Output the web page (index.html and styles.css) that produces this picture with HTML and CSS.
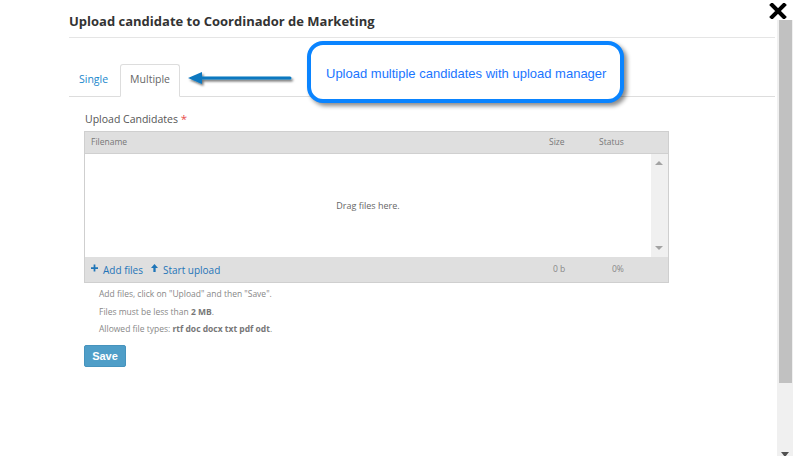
FILE: index.html
```html
<!DOCTYPE html>
<html>
<head>
<meta charset="utf-8">
<link rel="stylesheet" href="styles.css">
</head>
<body>
<div class="page">
  <div class="modal">
    <div class="modal-header">
      <h4 class="title">Upload candidate to Coordinador de Marketing</h4>
    </div>
    <ul class="tabs">
      <li class="tab"><a class="tab-link">Single</a></li>
      <li class="tab active"><a class="tab-link">Multiple</a></li>
    </ul>
    <div class="tab-content">
      <label class="field-label">Upload Candidates <span class="req">*</span></label>
      <div class="uploader">
        <div class="up-head">
          <span class="col-name">Filename</span>
          <span class="col-size">Size</span>
          <span class="col-status">Status</span>
        </div>
        <div class="up-body">
          <div class="drop">Drag files here.</div>
          <div class="up-scroll">
            <span class="tri-up"></span>
            <span class="tri-down"></span>
          </div>
        </div>
        <div class="up-foot">
          <div class="actions">
            <a class="act"><svg class="ico" viewBox="0 0 8 8"><path d="M3 0h2v3h3v2H5v3H3V5H0V3h3z" fill="#1f75b8"/></svg>Add files</a>
            <a class="act"><svg class="ico" viewBox="0 0 8 9"><path d="M4 0L8 4.5H5.3V9H2.7V4.5H0z" fill="#1f75b8"/></svg>Start upload</a>
          </div>
          <span class="foot-size">0 b</span>
          <span class="foot-status">0%</span>
        </div>
      </div>
      <div class="help">
        <p>Add files, click on "Upload" and then "Save".</p>
        <p>Files must be less than <b>2 MB</b>.</p>
        <p>Allowed file types: <b>rtf doc docx txt pdf odt</b>.</p>
      </div>
      <button class="save">Save</button>
    </div>
  </div>
  <div class="scrollbar">
    <div class="thumb"></div>
    <span class="sb-down"></span>
  </div>
</div>

<div class="close">
  <svg viewBox="0 0 18 16" width="18" height="16"><path d="M3 2L15 14M15 2L3 14" stroke="#000" stroke-width="4" stroke-linecap="square"/></svg>
</div>

<svg class="arrow" width="112" height="24" viewBox="0 0 112 24">
  <defs>
    <filter id="sh" x="-20%" y="-50%" width="140%" height="200%">
      <feDropShadow dx="1.5" dy="2" stdDeviation="1.2" flood-color="#000" flood-opacity="0.55"/>
    </filter>
  </defs>
  <g filter="url(#sh)">
    <path d="M2 10L16 4V8.5H104a1.5 1.5 0 0 1 0 3H16V16z" fill="#0b78c0"/>
  </g>
</svg>

<div class="callout">Upload multiple candidates with upload manager</div>
</body>
</html>
```

FILE: styles.css
```css
* { box-sizing: border-box; }
html, body { margin: 0; padding: 0; }
body {
  width: 799px;
  height: 456px;
  overflow: hidden;
  background: #fff;
  font-family: "Open Sans", "Liberation Sans", sans-serif;
  color: #555;
  position: relative;
}
.page {
  display: flex;
  height: 456px;
}
.modal {
  width: 777px;
  padding-left: 69px;
  padding-right: 2px;
}
.modal-header {
  padding-top: 12px;
  height: 38px;
  border-bottom: 1px solid #e5e5e5;
}
.title {
  margin: 0;
  font-size: 13px;
  line-height: 18px;
  font-weight: 700;
  color: #333;
}
.tabs {
  list-style: none;
  margin: 26px 0 0;
  padding: 0;
  display: flex;
  border-bottom: 1px solid #ddd;
  height: 33px;
}
.tab {
  margin-right: 2px;
}
.tab-link {
  display: block;
  padding: 0 9px;
  height: 33px;
  line-height: 29px;
  font-size: 10.5px;
  color: #1a87cc;
  border: 1px solid transparent;
  border-radius: 3px 3px 0 0;
}
.tab.active .tab-link {
  color: #666;
  background: #fff;
  border-color: #ddd #ddd #fff;
}
.tab-content {
  padding: 14px 0 0 15px;
}
.field-label {
  display: block;
  font-size: 10.5px;
  line-height: 16px;
  color: #555;
  padding-left: 1px;
  margin-bottom: 4px;
}
.req { color: #e84c4c; font-size: 11.5px; }
.uploader {
  width: 585px;
  border: 1px solid #cfcfcf;
}
.up-head {
  display: grid;
  grid-template-columns: 1fr 50px 69px;
  height: 22px;
  line-height: 20px;
  background: #dfdfdf;
  border-bottom: 1px solid #d0d0d0;
  font-size: 8.5px;
  color: #777;
}
.col-name { padding-left: 6px; }
.up-body {
  display: flex;
  height: 103px;
  background: #fff;
}
.drop {
  flex: 1;
  text-align: center;
  line-height: 103px;
  font-size: 9px;
  color: #666;
}
.up-scroll {
  width: 17px;
  background: #f0f0f0;
  position: relative;
}
.tri-up, .tri-down {
  position: absolute;
  left: 4px;
  width: 0; height: 0;
  border-left: 4.5px solid transparent;
  border-right: 4.5px solid transparent;
}
.tri-up { top: 7px; border-bottom: 4px solid #a3a3a3; }
.tri-down { bottom: 7px; border-top: 4px solid #a3a3a3; }
.up-foot {
  display: grid;
  grid-template-columns: 1fr 59px 56px;
  height: 25px;
  line-height: 24px;
  background: #dfdfdf;
  font-size: 8.5px;
  color: #888;
}
.actions {
  display: flex;
  padding-left: 6px;
  gap: 8px;
  font-size: 10px;
}
.act {
  color: #1f75b8;
  display: flex;
  align-items: center;
}
.ico { width: 7px; height: 8px; margin-right: 5px; margin-top: -3px; }
.help {
  padding-left: 15px;
  margin-top: 2px;
}
.help p {
  margin: 0;
  font-size: 8.5px;
  line-height: 17.5px;
  color: #888;
}
.help b { color: #777; }
.save {
  margin-top: 7px;
  width: 42px;
  height: 22px;
  border: 1px solid #4693bd;
  border-radius: 2px;
  background: #4f9ec8;
  color: #fff;
  font-family: "Liberation Sans", Arial, sans-serif;
  font-weight: 700;
  font-size: 11px;
  padding: 0;
}
.scrollbar {
  margin-top: 20px;
  width: 16px;
  height: 436px;
  background: #f0f0f0;
  position: relative;
}
.thumb {
  margin-left: 2px;
  width: 13px;
  height: 363px;
  background: #c1c1c1;
}
.sb-down {
  position: absolute;
  left: 4px;
  bottom: -1px;
  width: 0; height: 0;
  border-left: 4px solid transparent;
  border-right: 4px solid transparent;
  border-top: 5px solid #505050;
}
.close {
  position: absolute;
  left: 766px;
  top: 0;
  width: 26px;
  height: 20px;
  background: #fff;
  padding: 3px 0 0 3px;
}
.close svg { display: block; }
.arrow {
  position: absolute;
  left: 186px;
  top: 68px;
}
.callout {
  position: absolute;
  left: 307px;
  top: 41px;
  width: 317px;
  height: 62px;
  border: 4px solid #0a84ff;
  border-radius: 16px;
  background: #fff;
  box-shadow: 3px 3px 4px rgba(0,0,0,0.45);
  font-family: "Liberation Sans", Arial, sans-serif;
  font-size: 13px;
  color: #1a75ff;
  padding: 2px 0 0 15px;
  line-height: 54px;
}
```
